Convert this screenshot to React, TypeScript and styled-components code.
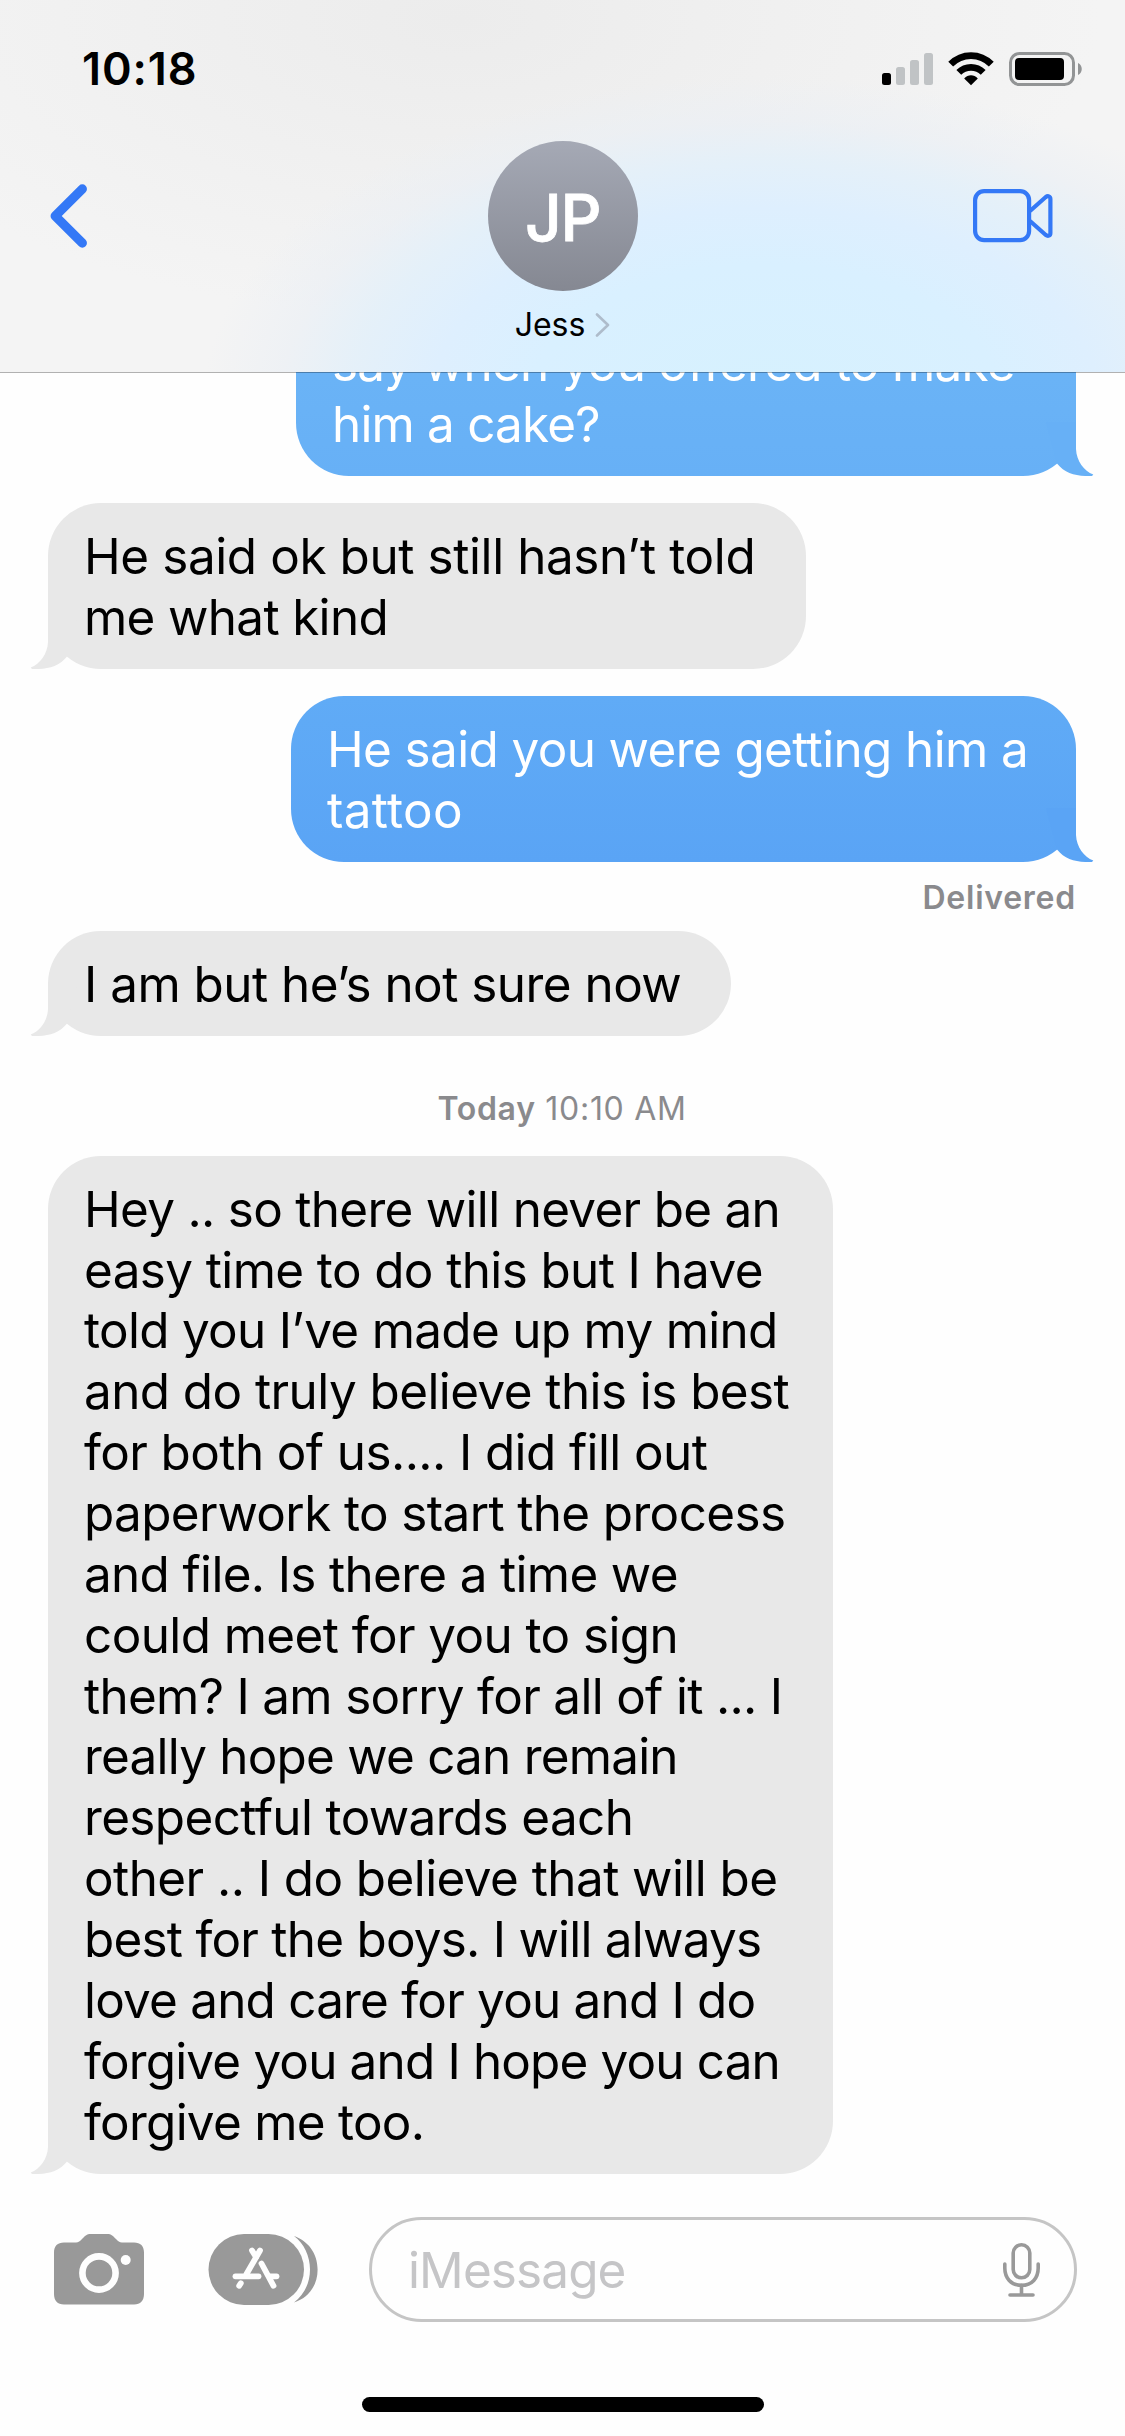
import React from 'react';
import styled, { createGlobalStyle, css } from 'styled-components';

const GlobalStyle = createGlobalStyle`
  *, *::before, *::after { box-sizing: border-box; }
  html, body { margin: 0; padding: 0; background: #fefefe; }
  body { font-family: Inter, "Liberation Sans", sans-serif; color: #000; }
  svg { display: block; }
`;

const Screen = styled.div`
  width: 1125px;
  height: 2436px;
  display: flex;
  flex-direction: column;
  overflow: hidden;
  background: #fefefe;
`;

const Header = styled.header`
  flex: none;
  height: 372px;
  position: relative;
  z-index: 1;
  display: flex;
  flex-direction: column;
  box-shadow: 0 1px 0 rgba(0, 0, 0, 0.3);
  background:
    radial-gradient(ellipse 520px 300px at 765px 400px,
      #d6f1fe 0%, #d9f0ff 45%, #deeffe 64%, rgba(228, 240, 249, 0.95) 80%, rgba(234, 239, 245, 0.6) 93%, rgba(238, 240, 242, 0) 108%),
    radial-gradient(ellipse 640px 300px at 460px 20px, #ececec 0%, rgba(240, 240, 240, 0) 100%),
    #f4f4f4;
`;

const StatusBar = styled.div`
  height: 141px;
  padding: 52px 43px 0 82px;
  display: flex;
  justify-content: space-between;
  align-items: flex-start;
`;

const Clock = styled.div`
  font-size: 45px;
  font-weight: 600;
  line-height: 34px;
  letter-spacing: 0.9px;
`;

const StatusIcons = styled.div`
  display: flex;
  gap: 15px;
`;

const NavBar = styled.div`
  display: grid;
  grid-template-columns: 300px 1fr 300px;
`;

const NavSide = styled.div<{ $end?: boolean }>`
  height: 150px;
  display: flex;
  align-items: center;
  justify-content: ${(p) => (p.$end ? 'flex-end' : 'flex-start')};
  padding: ${(p) => (p.$end ? '0 72px 0 0' : '0 0 0 50px')};
`;

const Contact = styled.div`
  display: flex;
  flex-direction: column;
  align-items: center;
`;

const Avatar = styled.div`
  width: 150px;
  height: 150px;
  border-radius: 50%;
  background: linear-gradient(#a5a9b5, #858892);
  color: #fff;
  display: flex;
  align-items: center;
  justify-content: center;
  font-size: 64px;
  font-weight: 500;
  letter-spacing: -1.5px;
  line-height: 1;
  padding-top: 3px;
  -webkit-text-stroke: 0.8px #fff;
`;

const ContactName = styled.div`
  margin-top: 14px;
  display: flex;
  align-items: center;
  gap: 10px;
  font-size: 32px;
  line-height: 40px;
`;

const Thread = styled.main`
  flex: 1;
  min-height: 0;
  overflow: hidden;
  display: flex;
  flex-direction: column;
  justify-content: flex-end;
  padding: 0 49px 43px 48px;
`;

const Bubble = styled.div<{ $mine?: boolean; $fill: string; $width: number; $gap?: number }>`
  flex: none;
  position: relative;
  width: ${(p) => p.$width}px;
  align-self: ${(p) => (p.$mine ? 'flex-end' : 'flex-start')};
  margin-top: ${(p) => p.$gap ?? 0}px;
  padding: 22.5px 0 21.5px 36px;
  border-radius: 53px;
  background: ${(p) => p.$fill};
  color: ${(p) => (p.$mine ? '#fff' : '#000')};
  font-size: 49.4px;
  line-height: 60.86px;
`;

const Line = styled.div<{ $tracking: number }>`
  white-space: pre;
  letter-spacing: ${(p) => p.$tracking}px;
`;

const Tail = styled.svg<{ $mine?: boolean }>`
  position: absolute;
  bottom: 0;
  width: 48px;
  height: 54px;
  ${(p) =>
    p.$mine
      ? css`
          right: -18px;
        `
      : css`
          left: -18px;
          transform: scaleX(-1);
        `}
`;

const Receipt = styled.div`
  flex: none;
  height: 69.5px;
  padding-top: 18px;
  text-align: right;
  font-size: 32px;
  line-height: 36px;
  font-weight: 600;
  letter-spacing: 0.75px;
  color: #8a8a8d;
`;

const Timestamp = styled.div`
  flex: none;
  height: 120px;
  padding-top: 54px;
  text-align: center;
  font-size: 32px;
  line-height: 38px;
  letter-spacing: 0.7px;
  color: #8a8a8d;
  white-space: pre;
`;

const Day = styled.span`
  font-weight: 600;
`;

const Composer = styled.footer`
  flex: none;
  height: 105px;
  padding: 0 48px 0 54px;
  display: flex;
  align-items: center;
`;

const CameraSlot = styled.div`
  width: 154px;
`;

const AppsSlot = styled.div`
  width: 161px;
`;

const Field = styled.div`
  flex: 1;
  height: 105px;
  border: 3px solid #c5c5c5;
  border-radius: 53px;
  padding: 0 34px 0 36px;
  display: flex;
  align-items: center;
  justify-content: space-between;
`;

const Placeholder = styled.span`
  font-size: 49.4px;
  line-height: 60px;
  letter-spacing: -0.85px;
  color: #c5c5c7;
`;

const HomeArea = styled.div`
  flex: none;
  height: 114px;
  padding-top: 75px;
  display: flex;
  justify-content: center;
  align-items: flex-start;
`;

const HomeBar = styled.div`
  width: 402px;
  height: 15px;
  border-radius: 8px;
  background: #000;
`;

type LineData = [string, number];

interface Message {
  mine?: boolean;
  fill: string;
  tail: string;
  width: number;
  gap?: number;
  lines: LineData[];
}

const GREY = '#e8e8e8';

const cake: Message = {
  mine: true,
  fill: 'linear-gradient(#6cb5f6, #67b0f6)',
  tail: '#67b0f6',
  width: 780,
  lines: [
    ['say when you offered to make', -0.72],
    ['him a cake?', -0.8],
  ],
};
const kind: Message = {
  fill: GREY,
  tail: GREY,
  width: 758,
  gap: 27.3,
  lines: [
    ['He said ok but still hasn’t told', -0.39],
    ['me what kind', -0.65],
  ],
};
const tattoo: Message = {
  mine: true,
  fill: 'linear-gradient(#60abf6, #5aa4f5)',
  tail: '#5aa4f5',
  width: 785,
  gap: 27.3,
  lines: [
    ['He said you were getting him a', -0.6],
    ['tattoo', 0.3],
  ],
};
const notSure: Message = {
  fill: GREY,
  tail: GREY,
  width: 683,
  lines: [['I am but he’s not sure now', -0.5]],
};
const longOne: Message = {
  fill: GREY,
  tail: GREY,
  width: 785,
  lines: [
    ['Hey .. so there will never be an', -0.68],
    ['easy time to do this but I have', -0.6],
    ['told you I’ve made up my mind', -0.68],
    ['and do truly believe this is best', -0.55],
    ['for both of us.... I did fill out', -0.58],
    ['paperwork to start the process', -0.61],
    ['and file. Is there a time we', -0.65],
    ['could meet for you to sign', -0.58],
    ['them? I am sorry for all of it ... I', -0.68],
    ['really hope we can remain', -0.76],
    ['respectful towards each', -0.6],
    ['other .. I do believe that will be', -0.55],
    ['best for the boys. I will always', -0.75],
    ['love and care for you and I do', -0.77],
    ['forgive you and I hope you can', -0.82],
    ['forgive me too.', -0.72],
  ],
};

function MessageBubble({ m }: { m: Message }) {
  return (
    <Bubble $mine={m.mine} $fill={m.fill} $width={m.width} $gap={m.gap}>
      <Tail $mine={m.mine} viewBox="0 0 48 54" aria-hidden>
        <path d="M0 0H30V27C30.5 39 38 49 47.3 52.6L46 54C31 54.5 19.5 52 11 41.5Z" fill={m.tail} />
      </Tail>
      {m.lines.map(([text, tracking]) => (
        <Line key={text} $tracking={tracking}>
          {text}
        </Line>
      ))}
    </Bubble>
  );
}

function SignalIcon() {
  return (
    <svg width="51" height="34" viewBox="0 0 51 34">
      <rect x="0" y="21" width="9" height="12" rx="2.5" fill="#000" />
      <rect x="14" y="15" width="9" height="18" rx="2.5" fill="#c0c3c5" />
      <rect x="28" y="8" width="9" height="25" rx="2.5" fill="#c0c3c5" />
      <rect x="42" y="1" width="9" height="32" rx="2.5" fill="#c0c3c5" />
    </svg>
  );
}

function WifiIcon() {
  return (
    <svg width="46" height="34" viewBox="0 0 46 34" fill="none" stroke="#000" strokeWidth="6.8">
      <path d="M2.7 12.2C14 .7 32 .7 43.3 12.2" />
      <path d="M10.8 20.4C17.5 13.6 28.5 13.6 35.2 20.4" />
      <path d="M16.2 26.4C20.1 22.3 25.9 22.3 29.8 26.4L23 33.2Z" fill="#000" stroke="none" />
    </svg>
  );
}

function BatteryIcon() {
  return (
    <svg width="73" height="34" viewBox="0 0 73 34">
      <rect x="1.5" y="1.5" width="63" height="31" rx="9" fill="none" stroke="#929495" strokeWidth="3" />
      <rect x="6" y="6" width="49" height="22" rx="4" fill="#000" />
      <path d="M69 11C74 13 74 21 69 23Z" fill="#929495" />
    </svg>
  );
}

function BackIcon() {
  return (
    <svg width="37" height="64" viewBox="0 0 37 64">
      <path
        d="M32.3 5L5.2 32L32.3 59"
        fill="none"
        stroke="#3478f6"
        strokeWidth="9.3"
        strokeLinecap="round"
        strokeLinejoin="round"
      />
    </svg>
  );
}

function VideoIcon() {
  return (
    <svg width="80" height="54" viewBox="0 0 80 54" fill="none" stroke="#3478f6" strokeWidth="4.2" strokeLinejoin="round">
      <rect x="2.1" y="2.1" width="54" height="49" rx="9" />
      <path d="M57 22L72.5 8.2C75 6.4 77.4 7.2 77.4 10V44C77.4 46.8 75 47.6 72.5 45.8L57 32" />
    </svg>
  );
}

function DisclosureIcon() {
  return (
    <svg width="15" height="24" viewBox="0 0 15 24">
      <path
        d="M2 1.5L13 12L2 22.5"
        fill="none"
        stroke="#aebccb"
        strokeWidth="2.6"
        strokeLinecap="round"
        strokeLinejoin="round"
      />
    </svg>
  );
}

function CameraIcon() {
  return (
    <svg width="90" height="71" viewBox="0 0 90 71">
      <path
        d="M10 8.5H22C24.5 8.5 26 7 28 5C31 2 32.5 0 37 0H53C57.5 0 59 2 62 5C64 7 65.5 8.5 68 8.5H80C86.5 8.5 90 12 90 18.500V60C90 66.5 86.5 70.5 80 70.5H10C3.5 70.5 0 66.5 0 60V18.5C0 12 3.5 8.5 10 8.5Z"
        fill="#999"
      />
      <circle cx="45" cy="39" r="16.6" fill="none" stroke="#fefefe" strokeWidth="6.6" />
      <circle cx="71.7" cy="26" r="5" fill="#fefefe" />
    </svg>
  );
}

function AppsIcon() {
  return (
    <svg width="110" height="71" viewBox="0 0 110 71">
      <rect x="0.5" y="0" width="95.5" height="71" rx="35.5" fill="#999" />
      <path d="M86 2C100 7 109.600 19 109.6 35.5S100 64 86 68.5C96 61 102 49 102 35.5S96 9.5 86 2Z" fill="#999" />
      <g fill="none" stroke="#fefefe" strokeWidth="5.8" strokeLinecap="round">
        <path d="M52 16.5L38.5 40" />
        <path d="M44 16.500L48 23" />
        <path d="M27.500 42.3H50.5" />
        <path d="M62 42.3H68.500" />
        <path d="M53.5 29.5L65.5 51.8" />
        <path d="M31.200 51.800L32.800 49.2" />
      </g>
    </svg>
  );
}

function MicIcon() {
  return (
    <svg width="37" height="54" viewBox="0 0 37 54" fill="none" stroke="#999" strokeWidth="3.6" strokeLinecap="round">
      <rect x="10.2" y="1.8" width="16.6" height="33" rx="8.3" />
      <path d="M1.8 21V25C1.8 35 8 42.3 18.5 42.3S35.2 35 35.2 25V21" />
      <path d="M18.5 42.3V51" />
      <path d="M7 52H30" />
    </svg>
  );
}

export default function App() {
  return (
    <>
      <GlobalStyle />
      <Screen>
        <Header>
          <StatusBar>
            <Clock>10:18</Clock>
            <StatusIcons>
              <SignalIcon />
              <WifiIcon />
              <BatteryIcon />
            </StatusIcons>
          </StatusBar>
          <NavBar>
            <NavSide>
              <BackIcon />
            </NavSide>
            <Contact>
              <Avatar>JP</Avatar>
              <ContactName>
                Jess
                <DisclosureIcon />
              </ContactName>
            </Contact>
            <NavSide $end>
              <VideoIcon />
            </NavSide>
          </NavBar>
        </Header>
        <Thread>
          <MessageBubble m={cake} />
          <MessageBubble m={kind} />
          <MessageBubble m={tattoo} />
          <Receipt>Delivered</Receipt>
          <MessageBubble m={notSure} />
          <Timestamp>
            <Day>Today</Day> 10:10 AM
          </Timestamp>
          <MessageBubble m={longOne} />
        </Thread>
        <Composer>
          <CameraSlot>
            <CameraIcon />
          </CameraSlot>
          <AppsSlot>
            <AppsIcon />
          </AppsSlot>
          <Field>
            <Placeholder>iMessage</Placeholder>
            <MicIcon />
          </Field>
        </Composer>
        <HomeArea>
          <HomeBar />
        </HomeArea>
      </Screen>
    </>
  );
}
